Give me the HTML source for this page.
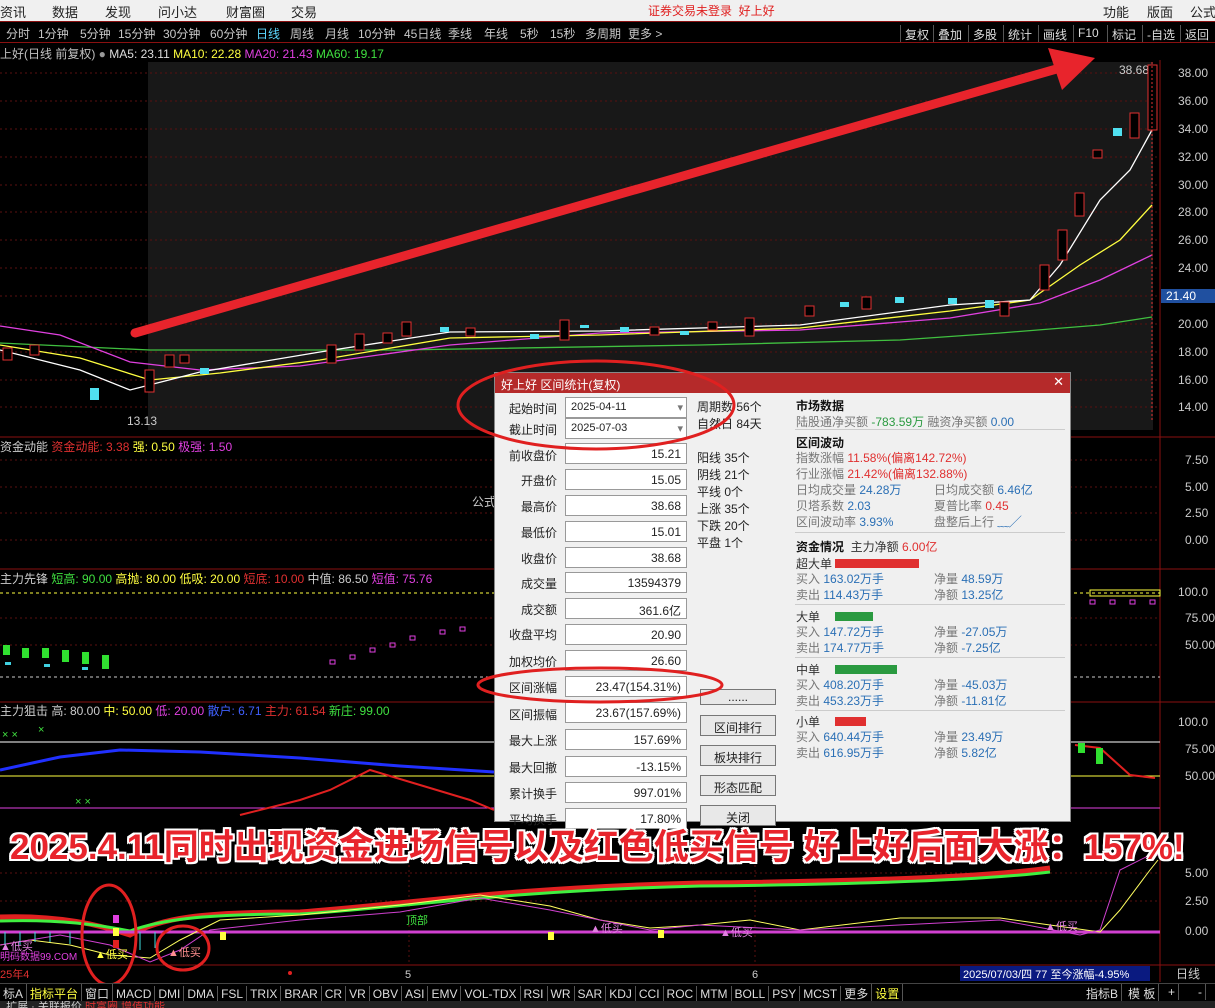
<!DOCTYPE html>
<html><head><meta charset="utf-8"><style>
*{margin:0;padding:0;box-sizing:border-box}
body{width:1215px;height:1008px;background:#000;position:relative;overflow:hidden;font-family:"Liberation Sans","Noto Sans CJK SC",sans-serif;font-size:12px;color:#c0c0c0}
.a{position:absolute;white-space:nowrap}
#top{left:0;top:0;width:1215px;height:21px;background:#f0f0f0;color:#222;font-size:13px}
#top span{position:absolute;top:2px}
#per{left:0;top:21px;width:1215px;height:22px;background:#000;border-top:1px solid #8a1010;border-bottom:1px solid #8a1010;font-size:12px;color:#c8c8c8}
#per span{position:absolute;top:3px}
.rb{position:absolute;top:2px;height:17px;border-left:1px solid #555;padding:1px 4px;color:#ddd}
.dlg{left:494px;top:372px;width:577px;height:450px;background:#f0f0f0;border:1px solid #888;color:#222;font-size:12px}
.tt{position:absolute;left:0;top:0;width:100%;height:20px;background:#b52a2a;color:#fff;padding:3px 6px;font-size:12px}
.lb{position:absolute;width:62px;text-align:right}
.bx{position:absolute;left:70px;width:122px;height:21px;background:#fff;border:1px solid #999;text-align:right;padding:3px 5px;font-size:12px}
.btn{position:absolute;left:205px;width:76px;height:21px;background:#e8e8e8;border:1px solid #777;text-align:center;padding-top:3px}
.r{position:absolute;left:301px;color:#333}
.bl{color:#2a6fb5}.rd{color:#e03030}.gr{color:#2a9a40}
.tab{left:0;top:983px;width:1215px;height:18px;background:#000;border-top:1px solid #444;font-size:12px;color:#ddd}
.tab span{display:inline-block;border-right:1px solid #555;padding:1px 3px}
</style></head><body>
<div id="top" class="a">
<span style="left:0">资讯</span><span style="left:52px">数据</span><span style="left:105px">发现</span><span style="left:158px">问小达</span><span style="left:226px">财富圈</span><span style="left:291px">交易</span>
<span style="left:648px;color:#e02020;font-size:12px">证券交易未登录&nbsp;&nbsp;好上好</span>
<span style="left:1103px">功能</span><span style="left:1147px">版面</span><span style="left:1190px">公式</span>
</div>
<div id="per" class="a">
<span style="left:6px">分时</span><span style="left:38px">1分钟</span><span style="left:80px">5分钟</span><span style="left:118px">15分钟</span><span style="left:163px">30分钟</span><span style="left:210px">60分钟</span><span style="left:256px;color:#5cd8ff">日线</span><span style="left:290px">周线</span><span style="left:325px">月线</span><span style="left:358px">10分钟</span><span style="left:404px">45日线</span><span style="left:448px">季线</span><span style="left:484px">年线</span><span style="left:520px">5秒</span><span style="left:550px">15秒</span><span style="left:585px">多周期</span><span style="left:628px">更多 &gt;</span>
<span class="rb" style="left:900px">复权</span><span class="rb" style="left:933px">叠加</span><span class="rb" style="left:968px">多股</span><span class="rb" style="left:1003px">统计</span><span class="rb" style="left:1038px">画线</span><span class="rb" style="left:1073px">F10</span><span class="rb" style="left:1107px">标记</span><span class="rb" style="left:1142px">-自选</span><span class="rb" style="left:1180px">返回</span>
</div>
<div class="a" style="left:0;top:45px;font-size:12px">上好(日线 前复权) <span style="color:#999">●</span> <span style="color:#ddd">MA5: 23.11</span> <span style="color:#ffff40">MA10: 22.28</span> <span style="color:#e040e0">MA20: 21.43</span> <span style="color:#40e040">MA60: 19.17</span></div>

<svg class="a" style="left:0;top:0" width="1215" height="1008">
<rect x="148" y="62" width="1005" height="368" fill="#181818"/>
<g stroke="#5a1010" stroke-dasharray="2,3" stroke-width="1">
<line x1="0" y1="73" x2="1160" y2="73"/><line x1="0" y1="101" x2="1160" y2="101"/><line x1="0" y1="129" x2="1160" y2="129"/><line x1="0" y1="157" x2="1160" y2="157"/><line x1="0" y1="185" x2="1160" y2="185"/><line x1="0" y1="212" x2="1160" y2="212"/><line x1="0" y1="240" x2="1160" y2="240"/><line x1="0" y1="268" x2="1160" y2="268"/><line x1="0" y1="296" x2="1160" y2="296"/><line x1="0" y1="324" x2="1160" y2="324"/><line x1="0" y1="352" x2="1160" y2="352"/><line x1="0" y1="380" x2="1160" y2="380"/><line x1="0" y1="407" x2="1160" y2="407"/>
<line x1="0" y1="460" x2="1160" y2="460"/><line x1="0" y1="487" x2="1160" y2="487"/><line x1="0" y1="513" x2="1160" y2="513"/><line x1="0" y1="540" x2="1160" y2="540"/>
<line x1="0" y1="618" x2="1160" y2="618"/><line x1="0" y1="645" x2="1160" y2="645"/>
<line x1="0" y1="873" x2="1160" y2="873"/><line x1="0" y1="901" x2="1160" y2="901"/>
<line x1="409" y1="835" x2="409" y2="965"/><line x1="755" y1="835" x2="755" y2="965"/>
</g>
<g stroke="#8a1010" stroke-width="1">
<line x1="1160" y1="60" x2="1160" y2="982"/>
<line x1="0" y1="437" x2="1215" y2="437"/><line x1="0" y1="569" x2="1215" y2="569"/><line x1="0" y1="702" x2="1215" y2="702"/><line x1="0" y1="965" x2="1215" y2="965"/>
</g>
<g fill="#ccc" font-size="12" font-family="Liberation Sans">
<text x="1178" y="77">38.00</text><text x="1178" y="105">36.00</text><text x="1178" y="133">34.00</text><text x="1178" y="161">32.00</text><text x="1178" y="189">30.00</text><text x="1178" y="216">28.00</text><text x="1178" y="244">26.00</text><text x="1178" y="272">24.00</text><text x="1178" y="328">20.00</text><text x="1178" y="356">18.00</text><text x="1178" y="384">16.00</text><text x="1178" y="411">14.00</text>
<text x="1185" y="464">7.50</text><text x="1185" y="491">5.00</text><text x="1185" y="517">2.50</text><text x="1185" y="544">0.00</text>
<text x="1178" y="596">100.0</text><text x="1185" y="622">75.00</text><text x="1185" y="649">50.00</text>
<text x="1178" y="726">100.0</text><text x="1185" y="753">75.00</text><text x="1185" y="780">50.00</text>
<text x="1185" y="877">5.00</text><text x="1185" y="905">2.50</text><text x="1185" y="935">0.00</text>
<text x="1119" y="74">38.68</text><text x="127" y="425">13.13</text>
</g>
<rect x="1161" y="289" width="54" height="14" fill="#2050a0"/><text x="1166" y="300" fill="#fff" font-size="12">21.40</text>
<polyline fill="none" stroke="#40c040" stroke-width="1.3" points="0,343 150,350 400,350 700,345 900,340 1000,333 1100,325 1152,317"/>
<polyline fill="none" stroke="#e040e0" stroke-width="1.3" points="0,326 60,335 130,362 200,370 300,366 450,345 600,333 800,330 950,318 1040,303 1100,280 1152,255"/>
<polyline fill="none" stroke="#ffff40" stroke-width="1.3" points="0,345 80,358 150,380 220,373 320,360 450,338 600,335 800,328 950,311 1030,300 1080,265 1120,240 1152,205"/>
<polyline fill="none" stroke="#fff" stroke-width="1.3" points="0,350 80,370 130,390 200,372 320,352 450,332 600,331 800,325 950,305 1030,300 1060,265 1100,200 1130,170 1152,130"/>
<g stroke-width="1">
<g fill="#000" stroke="#e03030">
<rect x="3" y="348" width="9" height="12"/><rect x="30" y="345" width="9" height="10"/><rect x="145" y="370" width="9" height="22"/><rect x="165" y="355" width="9" height="12"/><rect x="180" y="355" width="9" height="8"/><rect x="327" y="345" width="9" height="18"/><rect x="355" y="334" width="9" height="16"/><rect x="383" y="333" width="9" height="10"/><rect x="402" y="322" width="9" height="14"/><rect x="466" y="328" width="9" height="8"/><rect x="560" y="320" width="9" height="20"/><rect x="650" y="327" width="9" height="8"/><rect x="708" y="322" width="9" height="8"/><rect x="745" y="318" width="9" height="18"/><rect x="805" y="306" width="9" height="10"/><rect x="862" y="297" width="9" height="12"/><rect x="1000" y="302" width="9" height="14"/><rect x="1040" y="265" width="9" height="25"/><rect x="1058" y="230" width="9" height="30"/><rect x="1075" y="193" width="9" height="23"/><rect x="1093" y="150" width="9" height="8"/><rect x="1130" y="113" width="9" height="25"/><rect x="1148" y="65" width="9" height="65"/>
</g>
<line x1="1152" y1="62" x2="1152" y2="420" stroke="#e03030" stroke-dasharray="2,2"/>
<g fill="#50e0f0">
<rect x="90" y="388" width="9" height="12"/><rect x="200" y="368" width="9" height="6"/><rect x="440" y="327" width="9" height="5"/><rect x="530" y="334" width="9" height="5"/><rect x="580" y="325" width="9" height="3"/><rect x="620" y="327" width="9" height="5"/><rect x="680" y="331" width="9" height="4"/><rect x="840" y="302" width="9" height="5"/><rect x="895" y="297" width="9" height="6"/><rect x="948" y="298" width="9" height="6"/><rect x="985" y="300" width="9" height="8"/><rect x="1113" y="128" width="9" height="8"/>
</g>
</g>
<line x1="135" y1="333" x2="1060" y2="68" stroke="#e8242c" stroke-width="9" stroke-linecap="round"/>
<polygon points="1095,58 1048,48 1062,90" fill="#e8242c"/>
<text x="0" y="451" font-size="12" fill="#ccc">资金动能 <tspan fill="#e03030">资金动能: 3.38</tspan> <tspan fill="#ffff40">强: 0.50</tspan> <tspan fill="#e040e0">极强: 1.50</tspan></text>
<text x="472" y="506" font-size="12" fill="#ccc">公式</text>
<text x="0" y="583" font-size="12" fill="#ccc">主力先锋 <tspan fill="#40e040">短高: 90.00</tspan> <tspan fill="#ffff40">高抛: 80.00</tspan> <tspan fill="#ffff40">低吸: 20.00</tspan> <tspan fill="#e03030">短底: 10.00</tspan> 中值: 86.50 <tspan fill="#e040e0">短值: 75.76</tspan></text>
<line x1="0" y1="593" x2="1160" y2="593" stroke="#ffff40" stroke-dasharray="3,3"/>
<line x1="0" y1="677" x2="1160" y2="677" stroke="#ccc" stroke-dasharray="3,3"/>
<g fill="#30e030"><rect x="3" y="645" width="7" height="10"/><rect x="22" y="648" width="7" height="10"/><rect x="42" y="648" width="7" height="10"/><rect x="62" y="650" width="7" height="12"/><rect x="82" y="652" width="7" height="12"/><rect x="102" y="655" width="7" height="14"/></g>
<g fill="#40d0e0"><rect x="5" y="662" width="6" height="3"/><rect x="44" y="664" width="6" height="3"/><rect x="82" y="667" width="6" height="3"/></g>
<g fill="none" stroke="#e040e0"><rect x="330" y="660" width="5" height="4"/><rect x="350" y="655" width="5" height="4"/><rect x="370" y="648" width="5" height="4"/><rect x="390" y="643" width="5" height="4"/><rect x="410" y="636" width="5" height="4"/><rect x="440" y="630" width="5" height="4"/><rect x="460" y="627" width="5" height="4"/><rect x="1090" y="600" width="5" height="4"/><rect x="1110" y="600" width="5" height="4"/><rect x="1130" y="600" width="5" height="4"/><rect x="1150" y="600" width="5" height="4"/></g>
<rect x="1090" y="590" width="70" height="6" fill="none" stroke="#ffff40"/>
<text x="0" y="715" font-size="12" fill="#ccc">主力狙击 高: 80.00 <tspan fill="#ffff40">中: 50.00</tspan> <tspan fill="#e040e0">低: 20.00</tspan> <tspan fill="#4060ff">散户: 6.71</tspan> <tspan fill="#e03030">主力: 61.54</tspan> <tspan fill="#40e040">新庄: 99.00</tspan></text>
<line x1="0" y1="742" x2="1160" y2="742" stroke="#fff"/>
<line x1="0" y1="776" x2="1160" y2="776" stroke="#ffff40"/>
<line x1="0" y1="808" x2="1160" y2="808" stroke="#e040e0"/>
<polyline fill="none" stroke="#2030ff" stroke-width="3" points="0,770 60,757 120,750 200,752 300,758 400,766 494,772"/>
<polyline fill="none" stroke="#e02020" stroke-width="2" points="240,815 300,800 330,790 370,770 420,785 470,800 494,810"/>
<polyline fill="none" stroke="#e02020" stroke-width="2" points="1075,745 1100,748 1130,775 1155,778"/>
<rect x="1078" y="743" width="7" height="10" fill="#30e030"/><rect x="1096" y="748" width="7" height="16" fill="#30e030"/>
<g fill="#40e040" font-size="11"><text x="2" y="738">× ×</text><text x="38" y="733">×</text><text x="75" y="805">× ×</text></g>
<path d="M0,917 C60,915 100,925 130,935 160,918 200,912 300,912 400,905 500,888 700,883 900,881 1000,875 1050,868 1100,866 1155,866" fill="none" stroke="#e02020" stroke-width="5"/>
<path d="M0,921 C60,919 100,925 130,931 160,920 200,914 300,914 400,908 500,891 700,886 900,884 1000,878 1050,872 1100,870 1155,868" fill="none" stroke="#40f040" stroke-width="3"/>
<line x1="0" y1="932" x2="1160" y2="932" stroke="#d040d0" stroke-width="3"/>
<polyline fill="none" stroke="#ffff60" points="0,945 30,940 70,945 110,955 150,958 180,940 220,920 300,915 400,905 480,895 550,906 600,920 650,928 700,925 750,920 800,930 900,918 1000,918 1050,925 1100,932 1120,910 1150,870 1158,860"/>
<polyline fill="none" stroke="#d040d0" points="0,945 60,935 110,945 150,962 180,950 210,930 300,920 400,912 480,898 550,910 650,930 700,925 800,930 1000,920 1080,935 1100,930 1120,870 1150,855 1158,855"/>
<g stroke="#40e0e0"><line x1="5" y1="932" x2="5" y2="945"/><line x1="20" y1="932" x2="20" y2="945"/><line x1="35" y1="932" x2="35" y2="942"/><line x1="50" y1="932" x2="50" y2="942"/><line x1="70" y1="932" x2="70" y2="944"/><line x1="140" y1="932" x2="140" y2="950"/><line x1="155" y1="932" x2="155" y2="948"/></g>
<rect x="113" y="915" width="6" height="8" fill="#e040e0"/><rect x="113" y="928" width="6" height="8" fill="#ffff40"/><rect x="113" y="940" width="6" height="8" fill="#e02020"/>
<rect x="220" y="932" width="6" height="8" fill="#ffff40"/><rect x="548" y="932" width="6" height="8" fill="#ffff40"/><rect x="658" y="930" width="6" height="8" fill="#ffff40"/>
<g font-size="11" fill="#e080e0"><text x="0" y="950">▲低买</text><text x="168" y="956" fill="#ff9090">▲低买</text><text x="590" y="932">▲低买</text><text x="720" y="936">▲低买</text><text x="1045" y="930">▲低买</text><text x="95" y="958" fill="#ffff40">▲低买</text><text x="406" y="924" fill="#40e040">顶部</text></g>
<text x="0" y="960" font-size="10" fill="#e040e0">明码数据99.COM</text>
<text x="0" y="978" font-size="11" fill="#e03030">25年4</text><text x="405" y="978" font-size="11" fill="#ccc">5</text><text x="752" y="978" font-size="11" fill="#ccc">6</text>
<circle cx="290" cy="973" r="2" fill="#e02020"/>
<rect x="960" y="966" width="190" height="15" fill="#0a1a80"/><text x="963" y="978" font-size="11" fill="#fff">2025/07/03/四 77 至今涨幅-4.95%</text>
<text x="1176" y="978" font-size="12" fill="#ccc">日线</text>
<g fill="none" stroke="#e02020" stroke-width="3">
<ellipse cx="109" cy="935" rx="27" ry="50"/>
<ellipse cx="183" cy="948" rx="26" ry="22"/>
</g>
</svg>

<div class="a dlg">
<div class="tt">好上好 区间统计(复权)<span style="position:absolute;right:6px;top:1px;font-size:13px">✕</span></div>
<div class="lb" style="left:0;top:27px">起始时间</div><div class="bx" style="top:24px;text-align:left;font-size:11px">2025-04-11<span style="position:absolute;right:3px;color:#777">▾</span></div>
<div class="lb" style="left:0;top:48px">截止时间</div><div class="bx" style="top:45px;text-align:left;font-size:11px">2025-07-03<span style="position:absolute;right:3px;color:#777">▾</span></div>
<div class="lb" style="left:0;top:74px">前收盘价</div><div class="bx" style="top:70px">15.21</div>
<div class="lb" style="left:0;top:99px">开盘价</div><div class="bx" style="top:96px">15.05</div>
<div class="lb" style="left:0;top:125px">最高价</div><div class="bx" style="top:122px">38.68</div>
<div class="lb" style="left:0;top:151px">最低价</div><div class="bx" style="top:148px">15.01</div>
<div class="lb" style="left:0;top:177px">收盘价</div><div class="bx" style="top:174px">38.68</div>
<div class="lb" style="left:0;top:202px">成交量</div><div class="bx" style="top:199px">13594379</div>
<div class="lb" style="left:0;top:228px">成交额</div><div class="bx" style="top:225px">361.6亿</div>
<div class="lb" style="left:0;top:253px">收盘平均</div><div class="bx" style="top:251px">20.90</div>
<div class="lb" style="left:0;top:280px">加权均价</div><div class="bx" style="top:277px">26.60</div>
<div class="lb" style="left:0;top:306px">区间涨幅</div><div class="bx" style="top:303px">23.47(154.31%)</div>
<div class="lb" style="left:0;top:333px">区间振幅</div><div class="bx" style="top:329px">23.67(157.69%)</div>
<div class="lb" style="left:0;top:359px">最大上涨</div><div class="bx" style="top:356px">157.69%</div>
<div class="lb" style="left:0;top:386px">最大回撤</div><div class="bx" style="top:383px">-13.15%</div>
<div class="lb" style="left:0;top:412px">累计换手</div><div class="bx" style="top:409px">997.01%</div>
<div class="lb" style="left:0;top:438px">平均换手</div><div class="bx" style="top:435px">17.80%</div>
<div class="a" style="left:202px;top:26px;line-height:17px">周期数 56个<br>自然日 84天</div>
<div class="a" style="left:202px;top:77px;line-height:17px">阳线 35个<br>阴线 21个<br>平线 0个<br>上涨 35个<br>下跌 20个<br>平盘 1个</div>
<div class="btn" style="top:316px;height:16px;padding-top:0">......</div>
<div class="btn" style="top:342px">区间排行</div>
<div class="btn" style="top:372px">板块排行</div>
<div class="btn" style="top:402px">形态匹配</div>
<div class="btn" style="top:432px">关闭</div>
<div class="r" style="top:24px;font-weight:bold;color:#111">市场数据</div>
<div class="r" style="top:40px;color:#777">陆股通净买额 <span class="gr">-783.59万</span> 融资净买额 <span class="bl">0.00</span></div>
<div class="a" style="left:300px;top:56px;width:270px;border-top:1px solid #ccc"></div>
<div class="r" style="top:61px;font-weight:bold;color:#111">区间波动</div>
<div class="r" style="top:77px;color:#777;line-height:16px">指数涨幅 <span class="rd">11.58%(偏离142.72%)</span><br>行业涨幅 <span class="rd">21.42%(偏离132.88%)</span><br>日均成交量 <span class="bl">24.28万</span><br>贝塔系数 <span class="bl">2.03</span><br>区间波动率 <span class="bl">3.93%</span></div>
<div class="r" style="left:439px;top:109px;color:#777;line-height:16px">日均成交额 <span class="bl">6.46亿</span><br>夏普比率 <span class="rd">0.45</span><br>盘整后上行 <span class="bl">﹏╱</span></div>
<div class="a" style="left:300px;top:159px;width:270px;border-top:1px solid #ccc"></div>
<div class="r" style="top:165px"><b style="color:#111">资金情况</b>&nbsp; 主力净额 <span class="rd">6.00亿</span></div>
<div class="r" style="top:182px">超大单 <span style="display:inline-block;width:84px;height:9px;background:#e03030"></span></div>
<div class="r" style="top:198px;color:#777;line-height:16px">买入 <span class="bl">163.02万手</span><br>卖出 <span class="bl">114.43万手</span></div>
<div class="r" style="left:439px;top:198px;color:#777;line-height:16px">净量 <span class="bl">48.59万</span><br>净额 <span class="bl">13.25亿</span></div>
<div class="a" style="left:300px;top:231px;width:270px;border-top:1px solid #ccc"></div>
<div class="r" style="top:235px">大单 <span style="display:inline-block;width:38px;height:9px;background:#2a9a40;margin-left:12px"></span></div>
<div class="r" style="top:251px;color:#777;line-height:16px">买入 <span class="bl">147.72万手</span><br>卖出 <span class="bl">174.77万手</span></div>
<div class="r" style="left:439px;top:251px;color:#777;line-height:16px">净量 <span class="bl">-27.05万</span><br>净额 <span class="bl">-7.25亿</span></div>
<div class="a" style="left:300px;top:284px;width:270px;border-top:1px solid #ccc"></div>
<div class="r" style="top:288px">中单 <span style="display:inline-block;width:62px;height:9px;background:#2a9a40;margin-left:12px"></span></div>
<div class="r" style="top:304px;color:#777;line-height:16px">买入 <span class="bl">408.20万手</span><br>卖出 <span class="bl">453.23万手</span></div>
<div class="r" style="left:439px;top:304px;color:#777;line-height:16px">净量 <span class="bl">-45.03万</span><br>净额 <span class="bl">-11.81亿</span></div>
<div class="a" style="left:300px;top:337px;width:270px;border-top:1px solid #ccc"></div>
<div class="r" style="top:340px">小单 <span style="display:inline-block;width:31px;height:9px;background:#e03030;margin-left:12px"></span></div>
<div class="r" style="top:356px;color:#777;line-height:16px">买入 <span class="bl">640.44万手</span><br>卖出 <span class="bl">616.95万手</span></div>
<div class="r" style="left:439px;top:356px;color:#777;line-height:16px">净量 <span class="bl">23.49万</span><br>净额 <span class="bl">5.82亿</span></div>
</div>
<svg class="a" style="left:0;top:0" width="1215" height="1008"><g fill="none" stroke="#e02020" stroke-width="3"><ellipse cx="596" cy="405" rx="138" ry="44"/><ellipse cx="600" cy="685" rx="122" ry="17"/></g></svg>
<div class="a" style="left:10px;top:819px;font-size:35px;font-weight:bold;color:#e8242c;text-shadow:2px 2px 0 #fff,-2px -2px 0 #fff,2px -2px 0 #fff,-2px 2px 0 #fff,0 2px 0 #fff,2px 0 0 #fff,0 -2px 0 #fff,-2px 0 0 #fff">2025.4.11同时出现资金进场信号以及红色低买信号 好上好后面大涨：157%!</div>
<div class="a tab"><span>标A</span><span style="color:#ffff40">指标平台</span><span>窗口</span><span>MACD</span><span>DMI</span><span>DMA</span><span>FSL</span><span>TRIX</span><span>BRAR</span><span>CR</span><span>VR</span><span>OBV</span><span>ASI</span><span>EMV</span><span>VOL-TDX</span><span>RSI</span><span>WR</span><span>SAR</span><span>KDJ</span><span>CCI</span><span>ROC</span><span>MTM</span><span>BOLL</span><span>PSY</span><span>MCST</span><span>更多</span><span style="color:#ffff40">设置</span>
<span style="position:absolute;left:1083px;top:0">指标B</span><span style="position:absolute;left:1125px;top:0">模 板</span><span style="position:absolute;left:1165px;top:0">+</span><span style="position:absolute;left:1195px;top:0">-</span></div>
<div class="a" style="left:0;top:1001px;width:1215px;height:7px;background:#222;font-size:11px;color:#ccc;overflow:hidden;line-height:12px">&nbsp;&nbsp;扩展 · 关联报价 <span style="color:#e03030">时富圈</span> <span style="color:#e03030">增值功能</span></div>
</body></html>
